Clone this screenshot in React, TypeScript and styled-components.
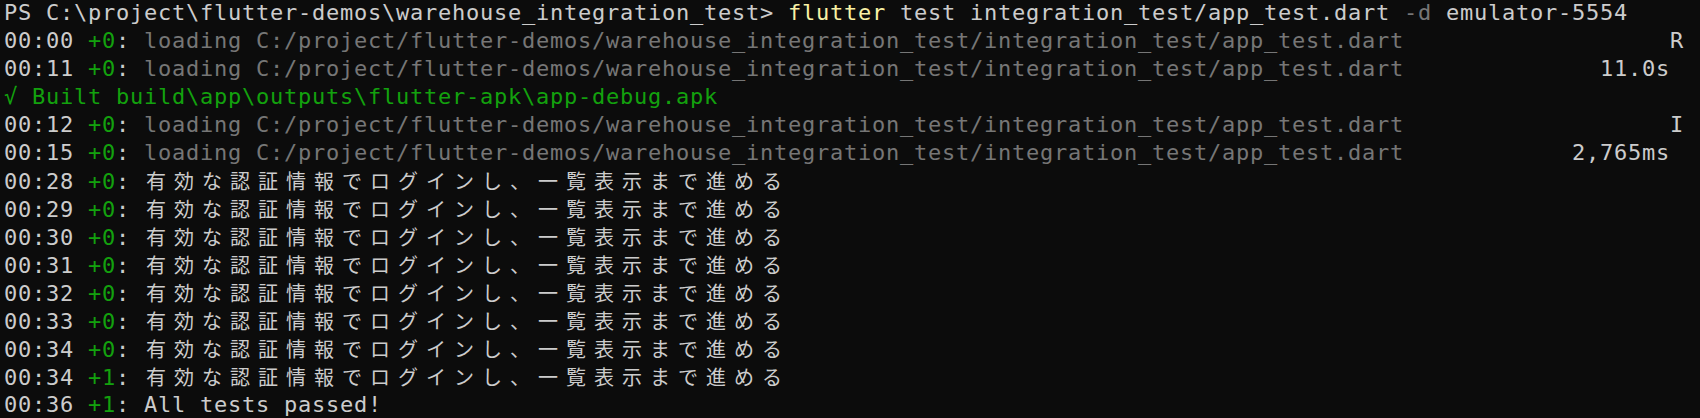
import React from "react";
import styled, { createGlobalStyle } from "styled-components";

const GlobalStyle = createGlobalStyle`
  html, body {
    margin: 0;
    padding: 0;
    background: #0c0c0c;
  }
`;

type Tone = "fg" | "dim" | "green" | "yellow";

const toneColor: Record<Tone, string> = {
  fg: "#cccccc",
  dim: "#767676",
  green: "#13a10e",
  yellow: "#f9f1a5",
};

const Terminal = styled.div`
  width: 1700px;
  height: 418px;
  overflow: hidden;
  box-sizing: border-box;
  background: #0c0c0c;
  padding: 0 0 0 4px;
  font-family: "DejaVu Sans Mono", "Liberation Mono", monospace;
  font-size: 22px;
  letter-spacing: 0.755px;
  color: #cccccc;
`;

const Screen = styled.div`
  display: flex;
  flex-direction: column;
  margin-top: -1px;
`;

const Line = styled.div`
  height: 28px;
  line-height: 28px;
  white-space: pre;
  overflow: visible;
`;

const Seg = styled.span<{ $tone: Tone }>`
  color: ${(p) => toneColor[p.$tone]};
`;

const WideCell = styled.span`
  display: inline-block;
  width: 28px;
  box-sizing: border-box;
  padding-left: 2px;
  font-family: "Noto Sans CJK JP", "Noto Sans CJK SC", sans-serif;
  font-size: 20px;
  letter-spacing: 0;
  line-height: 28px;
  color: #cccccc;
`;

type Part = { tone: Tone; text: string; wide?: boolean };

const WideText: React.FC<{ text: string }> = ({ text }) => (
  <>
    {Array.from(text).map((ch, i) => (
      <WideCell key={i}>{ch}</WideCell>
    ))}
  </>
);

const LOADING =
  "loading C:/project/flutter-demos/warehouse_integration_test/integration_test/app_test.dart";
const JP = "有効な認証情報でログインし、一覧表示まで進める";

const sp = (n: number) => " ".repeat(n);

const prefix = (time: string, count: string): Part[] => [
  { tone: "fg", text: `${time} ` },
  { tone: "green", text: count },
  { tone: "fg", text: ": " },
];

const lines: Part[][] = [
  [
    { tone: "fg", text: "PS C:\\project\\flutter-demos\\warehouse_integration_test> " },
    { tone: "yellow", text: "flutter" },
    { tone: "fg", text: " test integration_test/app_test.dart " },
    { tone: "dim", text: "-d" },
    { tone: "fg", text: " emulator-5554" },
  ],
  [...prefix("00:00", "+0"), { tone: "dim", text: LOADING }, { tone: "fg", text: sp(19) + "R" }],
  [...prefix("00:11", "+0"), { tone: "dim", text: LOADING }, { tone: "fg", text: sp(14) + "11.0s" }],
  [{ tone: "green", text: "√ Built build\\app\\outputs\\flutter-apk\\app-debug.apk" }],
  [...prefix("00:12", "+0"), { tone: "dim", text: LOADING }, { tone: "fg", text: sp(19) + "I" }],
  [...prefix("00:15", "+0"), { tone: "dim", text: LOADING }, { tone: "fg", text: sp(12) + "2,765ms" }],
  ...[
    ["00:28", "+0"],
    ["00:29", "+0"],
    ["00:30", "+0"],
    ["00:31", "+0"],
    ["00:32", "+0"],
    ["00:33", "+0"],
    ["00:34", "+0"],
    ["00:34", "+1"],
  ].map(([t, c]) => [...prefix(t, c), { tone: "fg" as Tone, text: JP, wide: true }]),
  [...prefix("00:36", "+1"), { tone: "fg", text: "All tests passed!" }],
];

export default function App() {
  return (
    <>
      <GlobalStyle />
      <Terminal>
        <Screen>
          {lines.map((parts, i) => (
            <Line key={i}>
              {parts.map((p, j) =>
                p.wide ? (
                  <WideText key={j} text={p.text} />
                ) : (
                  <Seg key={j} $tone={p.tone}>
                    {p.text}
                  </Seg>
                )
              )}
            </Line>
          ))}
        </Screen>
      </Terminal>
    </>
  );
}
